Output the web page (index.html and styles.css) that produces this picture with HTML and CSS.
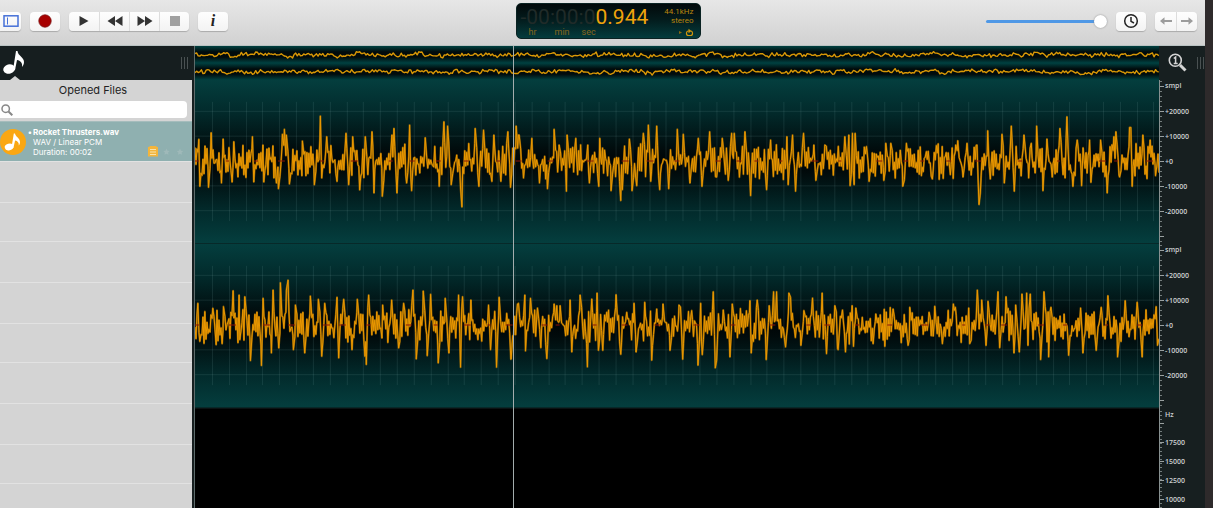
FILE: index.html
```html
<!DOCTYPE html>
<html lang="en">
<head>
<meta charset="utf-8">
<title>Rocket Thrusters.wav</title>
<link rel="stylesheet" href="styles.css">
</head>
<body>
<div class="window">
  <header class="toolbar">
    <div class="tools">
      <button class="btn btn-side" aria-label="Toggle sidebar"><svg width="16" height="12" viewBox="0 0 16 12" fill="none" stroke="#4670d8"><rect x="1" y=".8" width="14" height="10.4" stroke-width="1.5"/><path d="M4.5 2.5v7"/></svg></button>
      <button class="btn btn-rec" aria-label="Record"><svg width="14" height="14" viewBox="0 0 14 14"><circle cx="7" cy="7" r="6.2" fill="#a80000" stroke="#7c1414" stroke-width=".8"/></svg></button>
      <div class="group">
        <button class="btn" aria-label="Play"><svg width="10" height="12" viewBox="0 0 10 12"><path d="M.5 1l9 5-9 5z" fill="#333"/></svg></button>
        <button class="btn" aria-label="Rewind"><svg width="16" height="12" viewBox="0 0 16 12" fill="#333"><path d="M8 1v10L.5 6zM15.500 1v10L8 6z"/></svg></button>
        <button class="btn" aria-label="Fast forward"><svg width="16" height="12" viewBox="0 0 16 12" fill="#333"><path d="M.5 1v10L8 6zM8 1v10l7.500-5z"/></svg></button>
        <button class="btn" aria-label="Stop"><svg width="10" height="10" viewBox="0 0 10 10"><path d="M0 0h10v10H0z" fill="#a0a0a0"/></svg></button>
      </div>
      <button class="btn btn-info" aria-label="Information">i</button>
    </div>
    <div class="display">
      <div class="clock">
        <div class="time"><span class="ghost">-00:00:0</span>0.944</div>
        <div class="units"><span>hr</span><span>min</span><span>sec</span></div>
      </div>
      <div class="format">
        <span>44.1kHz</span><span>stereo</span>
        <svg width="16" height="9" viewBox="0 0 16 9" fill="none"><path d="M1 3l3 1.500-3 1.500z" fill="#8a6a10"/><path d="M11 3h-1a2 2 0 0 0-1.500 2v.5A2 2 0 0 0 10.500 7.500h2A2 2 0 0 0 14.500 5.500V5A2 2 0 0 0 13 3" stroke="#d0960c" stroke-width="1.200"/><path d="M10.500 .8v4.400l3-2.200z" fill="#d0960c"/></svg>
      </div>
    </div>
    <div class="tools tools-end">
      <input class="volume" type="range" min="0" max="100" value="100" aria-label="Volume">
      <button class="btn btn-clock" aria-label="History"><svg width="16" height="16" viewBox="0 0 16 16" fill="none" stroke="#222" stroke-width="1.500"><circle cx="8" cy="8" r="6.300"/><path d="M8 4v4.300l3 1.700"/></svg></button>
      <div class="group nav">
        <button class="btn" aria-label="Back"><svg width="12" height="8" viewBox="0 0 12 8"><path d="M0 4l4.500-3.800V3H12v2H4.500v2.800z" fill="#9c9c9c"/></svg></button>
        <button class="btn" aria-label="Forward"><svg width="12" height="8" viewBox="0 0 12 8"><path d="M12 4L7.500 .2V3H0v2h7.500v2.800z" fill="#9c9c9c"/></svg></button>
      </div>
    </div>
  </header>
  <main class="main">
    <aside class="sidebar">
      <div class="tabs">
        <svg class="note" width="22" height="25" viewBox="0 0 22 25"><ellipse cx="6.200" cy="19" rx="6" ry="4.700" transform="rotate(-15 6.200 19)" fill="#fff"/><path d="M10 20L13 1h1.500c.5 5 6.500 6 6.500 11 0 2-.8 3.800-2 5 .8-4-1.500-6.500-5-7L12 20z" fill="#fff"/></svg>
        <i class="notch"></i>
        <i class="grip"></i>
      </div>
      <h1 class="title">Opened Files</h1>
      <div class="search">
        <svg width="12" height="12" viewBox="0 0 12 12" fill="none" stroke="#888" stroke-width="1.500"><circle cx="4.700" cy="4.700" r="3.700"/><path d="M7.500 7.500L11.300 11.300" stroke-width="2"/></svg>
        <input type="text" aria-label="Search opened files">
      </div>
      <div class="files">
        <article class="file">
          <svg class="disc" width="26" height="26" viewBox="0 0 26 26"><circle cx="13" cy="13" r="13" fill="#faa712"/><ellipse cx="9" cy="18" rx="4.300" ry="3.300" transform="rotate(-15 9 18)" fill="#fff"/><path d="M11.500 18.500L13.800 4.500h1.200c.6 3.500 5 4.500 5 8.500 0 1.500-.5 2.500-1.200 3.500.3-2.800-1-4.500-3.700-5l-1.700 7.500z" fill="#fff"/></svg>
          <div class="meta">
            <h2>Rocket Thrusters.wav</h2>
            <p>WAV / Linear PCM</p>
            <p>Duration: 00:02</p>
          </div>
          <svg class="marks" width="37" height="11" viewBox="0 0 37 11"><path d="M0 1h1.500V0h7v1H10v9.500H0z" fill="#f3b53c"/><path d="M2 3.500h6M2 6h6M2 8.500h6" stroke="#f7e3ae" stroke-width="1"/><path d="M18.500 2.500l1 2.200 2.200.3-1.600 1.500.4 2.200-2-1-2 1 .4-2.200L15.300 5l2.200-.3zM32 2.500l1 2.200 2.200.3-1.600 1.500.4 2.200-2-1-2 1 .4-2.200L28.800 5l2.200-.3z" fill="#9fb9b9"/></svg>
        </article>
      </div>
    </aside>
    <section class="waves">
      <svg class="overview" viewBox="0 0 965 17" preserveAspectRatio="none" data-seed="5"></svg>
      <svg class="overview" viewBox="0 0 965 17" preserveAspectRatio="none" data-seed="23"></svg>
      <svg class="channel" id="left" viewBox="0 0 965 164" preserveAspectRatio="none"></svg>
      <svg class="channel" id="right" viewBox="0 0 965 164" preserveAspectRatio="none"></svg>
      <div class="spectrum"></div>
      <i class="playhead"></i>
    </section>
    <aside class="ruler">
      <div class="zoombar">
        <svg width="19" height="19" viewBox="0 0 19 19" fill="none" stroke="#d4d4d4"><circle cx="7.300" cy="7.300" r="6" stroke-width="1.600"/><path d="M12 12l5.500 5.500" stroke-width="3"/><path d="M5.800 5.500L7.600 4v6.500M5.700 10.500h4" stroke-width="1.500"/></svg>
        <i class="grip"></i>
      </div>
      <ul class="scale"><li>smpl</li><li>+20000</li><li>+10000</li><li>+0</li><li>-10000</li><li>-20000</li></ul>
      <ul class="scale"><li>smpl</li><li>+20000</li><li>+10000</li><li>+0</li><li>-10000</li><li>-20000</li></ul>
      <ul class="scale hertz"><li>Hz</li><li>17500</li><li>15000</li><li>12500</li><li>10000</li></ul>
    </aside>
  </main>
</div>
<script src="waves.js"></script>
</body>
</html>
```
FILE: styles.css
```css
* { box-sizing: border-box; }
body { margin: 0; background: #2e2a2b; font-family: Inter, "Liberation Sans", sans-serif; }
h1, h2, p, ul { margin: 0; padding: 0; list-style: none; font-weight: 400; }
svg { display: block; }

.window { display: flex; flex-direction: column; height: 100vh; margin-right: 8px; overflow: hidden; }

.toolbar {
  display: grid; grid-template-columns: 1fr auto 1fr; align-items: center;
  flex: none; height: 46px; padding-bottom: 3px;
  background: linear-gradient(#e7e7e7, #d1d1d1);
  border-bottom: 1px solid #b9c2c2;
}
.tools { display: flex; align-items: center; gap: 9px; }
.tools-end { justify-content: flex-end; padding-right: 8px; }
.btn {
  display: flex; align-items: center; justify-content: center;
  width: 30px; height: 19px; padding: 0; border: 0; border-radius: 4px;
  background: linear-gradient(#fefefe, #f3f3f3); box-shadow: 0 1px 1px #aaa;
}
.btn-side { width: 21px; border-radius: 0 4px 4px 0; }
.btn-info { font: italic bold 16px "Liberation Serif", serif; color: #222; }
.group { display: flex; margin: 0; border-radius: 4px; box-shadow: 0 1px 1px #aaa; }
.group .btn { box-shadow: none; border-radius: 0; }
.group .btn + .btn { border-left: 1px solid #ddd; }
.group .btn:first-child { border-radius: 4px 0 0 4px; }
.group .btn:last-child { border-radius: 0 4px 4px 0; }
.nav .btn { width: 21px; }
.volume { appearance: none; width: 121px; height: 14px; margin: 0; background: none; }
.volume::-webkit-slider-runnable-track { height: 3px; border-radius: 2px; background: #4f98e6; }
.volume::-webkit-slider-thumb {
  appearance: none; width: 13px; height: 13px; margin-top: -5px;
  border-radius: 50%; background: #fff; box-shadow: 0 0 2px #888;
}

.display {
  display: flex; justify-content: space-between;
  width: 185px; height: 36px; margin-left: 11px; padding: 2px 6px 0 4px;
  border: 1px solid #0a2222; border-radius: 5px;
  background: linear-gradient(#02090a, #031b1c 45%, #043c3d);
  font-family: Roboto, sans-serif; color: #f0a40c;
}
.time { font-size: 21px; line-height: 22px; }
.ghost { color: #202b29; }
.units { display: flex; gap: 18px; padding-left: 8px; font-size: 9px; line-height: 8px; color: #87681d; }
.units span + span + span { margin-left: -6px; }
.format { display: flex; flex-direction: column; align-items: flex-end; font-size: 8px; line-height: 9px; padding-top: 1px; color: #b9850f; }
.format svg { margin-top: 3px; }

.main { display: grid; grid-template-columns: 192px 1fr 46px; flex: 1; min-height: 0; background: #171f20; }

.sidebar { display: flex; flex-direction: column; background: #d4d4d4; }
.tabs { position: relative; display: flex; justify-content: space-between; height: 34px; padding: 4px 4px 0 3px; background: #161e1f; }
.notch { position: absolute; left: 10px; bottom: 0; border: 5px solid transparent; border-top: 0; border-bottom: 4px solid #d4d4d4; }
.grip { width: 7px; height: 12px; margin-top: 7px; background: repeating-linear-gradient(90deg, #4a5152 0 1px, transparent 1px 3px); }
.title { padding-right: 6px; font-size: 11px; line-height: 21px; text-align: center; color: #222; }
.search { display: flex; align-items: center; height: 17px; margin-right: 5px; padding-left: 1px; background: #fff; border-radius: 0 4px 4px 0; }
.search input { flex: 1; min-width: 0; height: 15px; border: 0; outline: 0; background: none; }
.files {
  flex: 1; margin-top: 3px;
  background: repeating-linear-gradient(#d4d4d4 0 40px, #e2e2e2 40px 41px, #d4d4d4 41px 81px, #e2e2e2 81px 82px, #d4d4d4 82px 120px, #e2e2e2 120px 121px);
}
.file { position: relative; display: flex; align-items: center; height: 40px; background: #8fb0b0; border-top: 1px solid #a5bcbc; color: #fff; }
.disc { margin-right: 7px; }
.meta { font-size: 8px; line-height: 10px; }
.meta h2 { font-size: 8px; font-weight: 700; }
.meta h2::before { content: "•"; position: absolute; left: 28px; }
.marks { position: absolute; left: 148px; bottom: 4px; }

.waves { position: relative; display: flex; flex-direction: column; margin-left: 2px; border-left: 1px solid #5d6b6b; min-width: 0; background: #000; }
.waves svg { width: 100%; }
.overview { flex: none; height: 17px; background: linear-gradient(#004141, #010b0c 35%, #010b0c 65%, #004141); }
.channel { flex: none; height: 164px; border-bottom: 1px solid #072929; background: linear-gradient(#043e3e, #022a2b 20%, #010b0c 43%, #000506 50%, #010b0c 57%, #022a2b 80%, #043e3e); }
.channel .grid { stroke: #a5c8c8; stroke-opacity: .12; }
.channel .zero { stroke: #8c1408; stroke-dasharray: 7 2; }
.wave { fill: none; stroke: #eb9800; stroke-linejoin: round; }
.halo { fill: none; stroke: #d08800; stroke-width: 2; stroke-opacity: .6; stroke-linejoin: round; }
.overview .wave { stroke: #d99806; stroke-width: 1.4; }
.spectrum { flex: 1; border-top: 1px solid #0b1213; background: #000; }
.playhead { position: absolute; top: 0; bottom: 0; left: 33%; width: 1px; background: #a3adad; }

.ruler { display: flex; flex-direction: column; background: #171f20; color: #cdd0d0; font: 7px "Open Sans", sans-serif; }
.zoombar { display: flex; justify-content: space-between; flex: none; height: 34px; padding: 7px 1px 0 9px; }
.zoombar .grip { margin-top: 4px; }
.scale {
  flex: none; height: 164px; padding-left: 5px; border-left: 1px solid #879090; font-weight: 600;
  background:
    repeating-linear-gradient(transparent 0 6px, #99a0a0 6px 7px, transparent 7px 25px) 0 0 / 4px 100% no-repeat,
    repeating-linear-gradient(transparent 0 1px, #747d7d 1px 2px, transparent 2px 5px) 0 0 / 2px 100% no-repeat;
}
.scale li { height: 25px; line-height: 25px; }
.scale li:first-child { height: 19px; line-height: 12px; }
.hertz {
  flex: 1;
  background:
    repeating-linear-gradient(transparent 0 15px, #99a0a0 15px 16px, transparent 16px 19px) 0 0 / 4px 100% no-repeat,
    repeating-linear-gradient(transparent 0 3px, #747d7d 3px 4px) 0 0 / 2px 100% no-repeat;
}
.hertz li { height: 19px; line-height: 19px; }
.scale.hertz li:first-child { height: 25px; line-height: 14px; }
```
FILE: waves.js
```js
const NS = "http://www.w3.org/2000/svg";

function random(seed) {
  let s = seed * 7919;
  return () => (s = (s * 16807) % 2147483647) / 2147483647;
}

function add(svg, cls, d) {
  const path = document.createElementNS(NS, "path");
  path.setAttribute("class", cls);
  path.setAttribute("d", d);
  svg.append(path);
}

// Peaks are grouped as [offset, zero, "x,y x,y ..."] in thirds of a pixel.
const left = [
  [-4.5, 350, "25,283 62,263 98,282 130,290 186,275 221,255 276,268 282,253 288,270 336,288 390,213 409,275 467,265 487,275 525,275 545,260 605,270 611,250 658,240 705,278 761,230 772,243 855,250 880,255 911,270 953,260 985,270 28,425 54,428 93,415 125,412 160,390 190,412 220,412 258,415 264,432 297,418 372,420 394,400 440,410 475,420 508,436 551,445 576,455 620,445 649,415 664,438 747,425 783,420 811,430 815,487 866,425 905,410 932,410 961,428"],
  [315.5, 215, "18,108 27,135 65,145 132,118 147,165 171,135 197,145 233,165 269,145 305,175 358,147 400,130 415,105 440,108 475,155 502,118 520,133 565,145 599,125 637,145 665,130 673,130 705,125 740,178 782,150 831,140 848,135 881,130 912,165 945,165 40,265 88,280 112,297 169,305 238,280 266,290 303,303 332,333 337,300 366,303 380,288 422,275 449,300 476,297 540,280 576,290 620,262 655,272 722,318 770,300 835,285 857,305 918,272"],
  [635.5, 215, "45,140 57,135 68,130 76,130 110,170 168,160 183,160 230,160 290,185 320,167 378,165 384,152 412,160 442,165 474,122 517,133 545,108 583,135 605,160 621,108 652,147 691,115 712,80 743,150 758,135 780,150 813,150 853,140 859,125 900,112 904,112 940,135 962,150 61,288 73,285 118,275 162,272 219,290 224,270 275,258 308,268 362,255 400,262 448,345 452,310 482,268 524,280 554,305 597,265 640,303 668,262 730,290 756,288 784,278 833,310 870,262 908,290 978,258"]
];
const right = [
  [-4.5, 257, "22,190 43,215 67,205 99,200 128,152 146,165 163,170 218,175 248,150 270,128 288,150 293,120 315,195 360,168 384,178 403,190 440,172 460,178 501,178 535,165 577,195 604,180 640,190 668,150 699,153 721,163 765,175 805,165 817,170 842,180 895,195 927,172 985,190 28,305 77,315 95,312 148,300 180,363 213,378 243,340 265,325 309,330 343,340 394,350 445,355 485,330 524,350 528,375 575,295 625,325 678,358 711,348 744,370 776,340 811,383 863,300 901,330 919,383 963,358"],
  [315.5, 195, "22,130 44,103 61,113 82,142 132,130 140,135 150,135 180,118 210,103 245,115 261,97 290,155 318,102 350,155 372,128 404,125 440,145 459,130 507,133 545,150 572,128 610,93 640,148 667,130 720,120 742,118 778,135 791,93 800,93 837,97 842,110 882,150 908,112 937,97 975,148 2,297 46,272 92,262 110,295 185,275 232,320 265,270 278,270 332,282 378,275 425,300 480,270 518,297 564,315 577,283 616,323 620,300 660,290 724,278 769,298 827,260 873,255 950,280 985,268"],
  [635.5, 195, "15,135 38,148 67,135 78,142 138,160 190,145 240,140 298,155 315,137 371,130 377,140 417,142 443,88 456,118 475,122 505,93 529,108 558,133 577,100 591,97 602,100 643,93 664,140 718,160 753,142 815,140 835,105 887,120 923,125 980,138 23,265 47,275 71,258 130,250 165,258 235,255 338,250 420,250 469,255 510,262 553,278 569,275 595,255 633,298 657,290 717,285 760,278 800,270 864,290 938,290 984,255"]
];

function drawChannel(id, groups, seed) {
  const svg = document.getElementById(id);
  const next = random(seed);
  const step = 1;
  const samples = [];
  for (let i = 0; i * step <= 965; i++) {
    const side = i % 2 ? 1 : -1;
    samples.push([i * step, 82 + side * (2 + next() * 10) + (next() - 0.5) * 14]);
  }
  for (const [offset, zero, list] of groups) {
    for (const pair of list.split(" ")) {
      const [px, py] = pair.split(",").map(Number);
      const x = px / 3 + offset;
      const height = (py - zero) / 3;
      const i = Math.round(x / step);
      if (!samples[i]) continue;
      samples[i] = [x, 82 + height];
      for (const n of [i - 1, i + 1]) {
        if (samples[n] && Math.abs(samples[n][1] - 82) < 13) samples[n][1] = 82 + height * (0.1 + next() * 0.5);
      }
    }
  }
  samples.sort((a, b) => a[0] - b[0]);
  let grid = "M0 31.5H965M0 56.500H965M0 106.500H965M0 131.500H965";
  for (let x = 17; x < 965; x += 16.83) grid += `M${Math.round(x) + 0.5} 22V142`;
  add(svg, "grid", grid);
  const line = "M" + samples.map(p => p[0].toFixed(2) + " " + p[1].toFixed(2)).join("L");
  add(svg, "halo", line);
  add(svg, "wave", line);
  const zero = [];
  for (let x = 0; x < 960; x += 14 + next() * 30) zero.push(`M${x.toFixed(0)} 81.500h${(3 + next() * 5).toFixed(0)}`);
  add(svg, "zero", zero.join(""));
}

function drawOverview(svg) {
  const next = random(Number(svg.dataset.seed));
  const points = [];
  let drift = 0;
  for (let x = 0; x <= 965; x += 1.6) {
    drift = drift * 0.6 + (next() - 0.5) * 2.6;
    points.push(`${x.toFixed(1)} ${(8.8 + drift + (next() - 0.5) * 3).toFixed(2)}`);
  }
  add(svg, "wave", "M" + points.join("L"));
}

document.querySelectorAll(".overview").forEach(drawOverview);
drawChannel("left", left, 11);
drawChannel("right", right, 37);
```
